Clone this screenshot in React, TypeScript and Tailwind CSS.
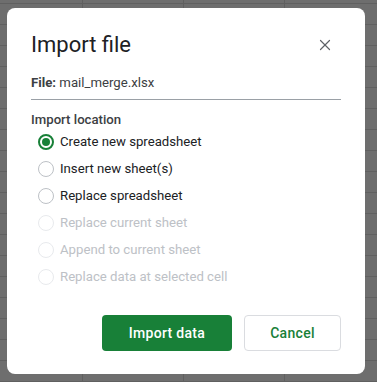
import { X } from "lucide-react";

const options = [
  { label: "Create new spreadsheet", checked: true, disabled: false },
  { label: "Insert new sheet(s)", checked: false, disabled: false },
  { label: "Replace spreadsheet", checked: false, disabled: false },
  { label: "Replace current sheet", checked: false, disabled: true },
  { label: "Append to current sheet", checked: false, disabled: true },
  { label: "Replace data at selected cell", checked: false, disabled: true },
];

const Radio = ({ checked, disabled }: { checked: boolean; disabled: boolean }) => {
  if (checked) {
    return (
      <div className="w-4 h-4 rounded-full border-2 border-[#188038] flex items-center justify-center">
        <div className="w-2 h-2 rounded-full bg-[#188038]" />
      </div>
    );
  }
  return (
    <div
      className={
        disabled
          ? "w-4 h-4 rounded-full border border-[#e8eaed]"
          : "w-4 h-4 rounded-full border border-[#bdc1c6]"
      }
    />
  );
};

export default function App() {
  return (
    <div
      className="w-[377px] h-[382px] pt-[8px] pl-[7px] bg-[#6e6e6e] bg-[linear-gradient(to_bottom,#606060_1px,transparent_1px),linear-gradient(to_right,#606060_1px,transparent_1px)] bg-[length:101px_21px] bg-[position:-19px_3px]"
      style={{ fontFamily: "Roboto, 'Liberation Sans', sans-serif" }}
    >
      <div className="w-[358px] h-[366px] bg-white rounded-lg px-6 pt-[23px] flex flex-col">
        <div className="flex items-center justify-between">
          <h1 className="text-[22px] leading-7 text-[#202124]">Import file</h1>
          <X className="w-[18px] h-[18px] text-[#5f6368] mr-[7px]" strokeWidth={1.6} />
        </div>

        <div className="mt-[14px] pb-[6px] border-b border-[#9aa0a6] text-[13.2px] leading-5 text-[#3c4043]">
          <span className="font-bold">File:</span> mail_merge.xlsx
        </div>

        <div className="mt-[10px] text-[13.2px] leading-5 font-medium text-[#3c4043]">Import location</div>

        <div className="mt-[-2px] flex flex-col">
          {options.map((o) => (
            <div key={o.label} className="h-[27px] flex items-center pl-[7px] gap-[6px]">
              <Radio checked={o.checked} disabled={o.disabled} />
              <span
                className={
                  o.disabled
                    ? "text-[13.2px] leading-5 text-[#bdc1c6]"
                    : "text-[13.2px] leading-5 text-[#202124]"
                }
              >
                {o.label}
              </span>
            </div>
          ))}
        </div>

        <div className="mt-auto mb-[23px] flex justify-end gap-3">
          <button className="w-[130px] h-9 rounded bg-[#188038] text-white text-sm font-medium tracking-[0.3px]">
            Import data
          </button>
          <button className="w-[97px] h-9 rounded border border-[#dadce0] text-[#188038] text-sm font-medium tracking-[0.3px]">
            Cancel
          </button>
        </div>
      </div>
    </div>
  );
}
